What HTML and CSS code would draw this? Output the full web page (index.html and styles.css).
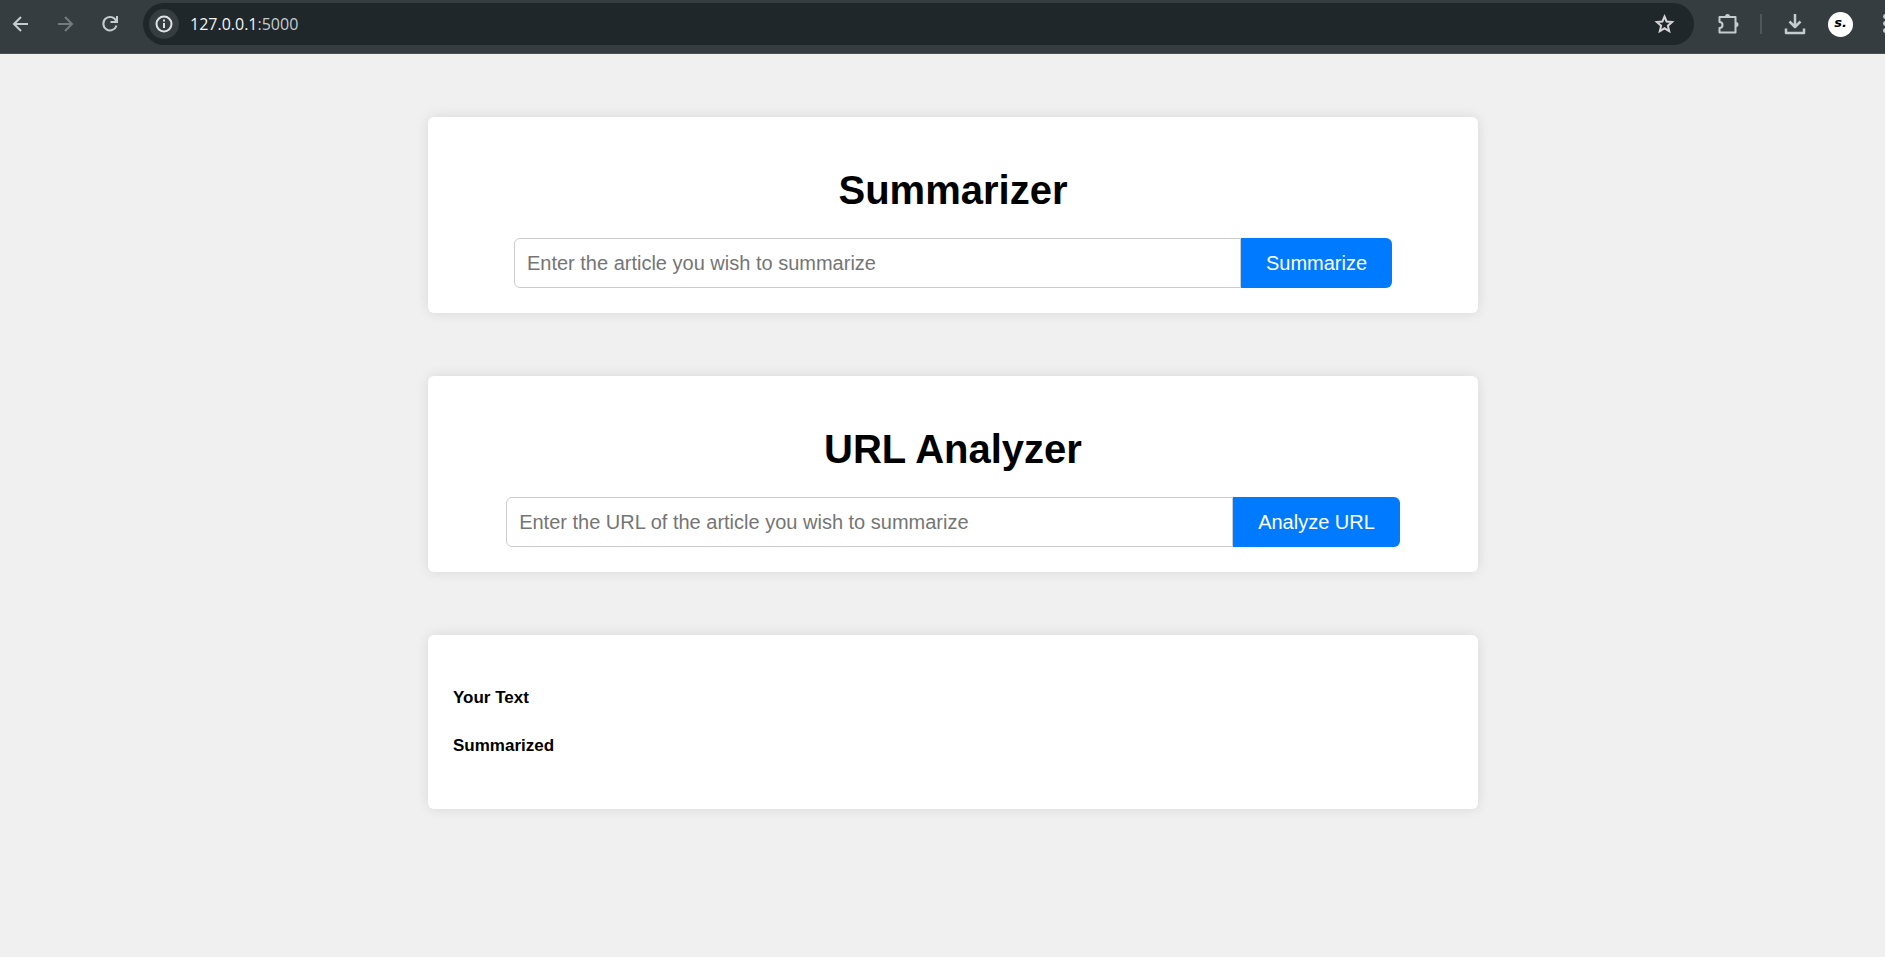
FILE: index.html
```html
<!DOCTYPE html>
<html lang="en">
<head>
<meta charset="utf-8">
<title>Summarizer</title>
<link rel="stylesheet" href="styles.css">
</head>
<body>
<div class="window">
  <header class="toolbar">
    <button class="tool" type="button" aria-label="Back">
      <svg viewBox="0 0 24 24"><path d="M20 12H6.500M13 5l-7 7 7 7"/></svg>
    </button>
    <button class="tool tool-disabled" type="button" aria-label="Forward">
      <svg viewBox="0 0 24 24"><path d="M5 12h13.500M12 5l7 7-7 7"/></svg>
    </button>
    <button class="tool" type="button" aria-label="Reload">
      <svg viewBox="0 0 24 24"><path d="M18.200 9A6.700 6.700 0 1 0 18.500 13.500"/><path d="M19 4v6h-6.500"/></svg>
    </button>
    <div class="address">
      <button class="site-info" type="button" aria-label="Site information">
        <svg viewBox="0 0 24 24"><circle cx="12" cy="12" r="7.500"/><path d="M12 11v5M12 7.500v2"/></svg>
      </button>
      <span class="url">127.0.0.1<span class="port">:5000</span></span>
      <button class="tool bookmark" type="button" aria-label="Bookmark">
        <svg viewBox="0 0 24 24"><path d="M11.500 4.500l2.100 5 5.500.500-4.200 3.700 1.300 5.500-4.700-2.900-4.700 2.900 1.300-5.500L3.900 10l5.500-.5z"/></svg>
      </button>
    </div>
    <button class="tool" type="button" aria-label="Extensions">
      <svg viewBox="0 0 24 24"><path stroke-linejoin="round" d="M4.500 5h16v15.500h-16v-4.500a3 3 0 0 0 0-6z"/><path class="solid" d="M10 4.500a2.500 2.500 0 0 1 5 0zM21 10a2.500 2.500 0 0 1 0 5z"/></svg>
    </button>
    <span class="divider"></span>
    <button class="tool" type="button" aria-label="Downloads">
      <svg viewBox="0 0 24 24"><path stroke-width="2.500" stroke-linejoin="round" d="M12 2v13M6.500 9.500l5.500 5.500 5.500-5.500M3 16.500v4.500h18v-4.500"/></svg>
    </button>
    <button class="avatar" type="button" aria-label="Profile">s.</button>
    <button class="tool" type="button" aria-label="Menu">
      <svg viewBox="0 0 24 24"><circle class="solid" cx="11.500" cy="4.500" r="2.500"/><circle class="solid" cx="11.500" cy="11.500" r="2.500"/><circle class="solid" cx="11.500" cy="18.500" r="2.500"/></svg>
    </button>
  </header>
  <main class="content">
    <section class="card">
      <h1 class="title">Summarizer</h1>
      <form class="entry">
        <input class="field" type="text" aria-label="Article" placeholder="Enter the article you wish to summarize">
        <button class="submit" type="button">Summarize</button>
      </form>
    </section>
    <section class="card">
      <h1 class="title">URL Analyzer</h1>
      <form class="entry">
        <input class="field" type="text" aria-label="Article URL" placeholder="Enter the URL of the article you wish to summarize">
        <button class="submit" type="button">Analyze URL</button>
      </form>
    </section>
    <section class="card">
      <h5 class="label">Your Text</h5>
      <h5 class="label">Summarized</h5>
    </section>
  </main>
</div>
</body>
</html>
```
FILE: styles.css
```css
* { box-sizing: border-box; }

body {
  margin: 0;
  min-height: 100vh;
  overflow: hidden;
  background: #f0f0f0;
  color: #000;
  font-family: "Liberation Sans", Arial, sans-serif;
}

button { border: 0; padding: 0; }

/* The window runs past the right edge of the view */
.window { width: calc(100% + 21px); }

.toolbar {
  display: flex;
  align-items: center;
  gap: 21px;
  padding: 3px 8px 8px;
  background: #363d40;
  border-bottom: 1px solid #4a4f51;
}

.tool {
  flex: none;
  width: 24px;
  height: 24px;
  background: none;
  color: #c3cdd0;
}

.tool svg, .site-info svg {
  display: block;
  width: 24px;
  height: 24px;
  fill: none;
  stroke: currentColor;
  stroke-width: 2;
}

.tool .solid { fill: currentColor; stroke: none; }
.tool-disabled { color: #757b7d; }

.address {
  flex: 1;
  display: flex;
  align-items: center;
  gap: 11px;
  height: 42px;
  padding: 0 17px 0 6px;
  border-radius: 21px;
  background: #1f272a;
}

.site-info {
  display: grid;
  place-items: center;
  width: 30px;
  height: 30px;
  border-radius: 50%;
  background: #363d40;
  color: #e0e3e4;
}

.url {
  flex: 1;
  color: #f2f4f4;
  font-family: "Open Sans", "Noto Sans", sans-serif;
  font-size: 16px;
  line-height: 24px;
}

.port { color: #c3cdd0; }
.bookmark { color: #d5d3d5; }

.divider {
  width: 2px;
  height: 20px;
  background: #50585b;
}

.avatar {
  width: 25px;
  height: 25px;
  padding-bottom: 3px;
  border-radius: 50%;
  background: #fff;
  color: #000;
  font: italic bold 13px/20px "DejaVu Sans", sans-serif;
}

.content {
  display: flex;
  flex-direction: column;
  align-items: center;
  gap: 63px;
  padding: 63px 20px;
}

.card {
  width: 100%;
  max-width: 1050px;
  padding: 25px;
  border-radius: 6px;
  background: #fff;
  box-shadow: 0 0 13px rgba(0, 0, 0, 0.1);
}

.title {
  margin: 25px 0;
  font-size: 40px;
  line-height: 46px;
  text-align: center;
}

.entry { display: flex; justify-content: center; }

.field {
  width: 727px;
  min-width: 0;
  height: 50px;
  padding: 0 12px;
  border: 1px solid #ccc;
  border-radius: 6px 0 0 6px;
  background: #fff;
  font: 20px/24px "Liberation Sans", Arial, sans-serif;
}

.field::placeholder { color: #757575; }

.submit {
  flex: none;
  padding: 0 25px;
  border-radius: 0 6px 6px 0;
  background: #007bff;
  color: #fff;
  font: 20px/24px "Liberation Sans", Arial, sans-serif;
}

.label {
  margin: 28px 0;
  font-size: 17px;
  line-height: 20px;
}
```
